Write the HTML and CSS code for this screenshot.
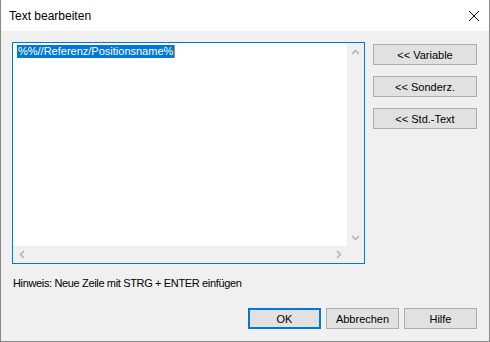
FILE: index.html
```html
<!DOCTYPE html>
<html lang="de">
<head>
<meta charset="utf-8">
<title>Text bearbeiten</title>
<link rel="stylesheet" href="styles.css">
</head>
<body>
<div class="window">
  <div class="titlebar">
    <span class="title">Text bearbeiten</span>
    <span class="close">
      <svg width="12" height="12" viewBox="0 0 12 12"><path d="M1 1 L11 11 M11 1 L1 11" stroke="#000" stroke-width="1" fill="none"/></svg>
    </span>
  </div>
  <div class="content">
    <div class="main-row">
      <div class="textbox">
        <div class="text-area"><span class="sel">%%//Referenz/Positionsname%</span><span class="caret"></span></div>
        <div class="vscroll">
          <span class="arrow"><svg width="9" height="6" viewBox="0 0 9 6"><path d="M1 5 L4.5 1.5 L8 5" stroke="#b5b5b5" stroke-width="1.6" fill="none"/></svg></span>
          <span class="arrow"><svg width="9" height="6" viewBox="0 0 9 6"><path d="M1 1 L4.5 4.5 L8 1" stroke="#b5b5b5" stroke-width="1.6" fill="none"/></svg></span>
        </div>
        <div class="hscroll">
          <span class="arrow"><svg width="6" height="9" viewBox="0 0 6 9"><path d="M5 1 L1.5 4.5 L5 8" stroke="#b5b5b5" stroke-width="1.6" fill="none"/></svg></span>
          <span class="arrow"><svg width="6" height="9" viewBox="0 0 6 9"><path d="M1 1 L4.5 4.5 L1 8" stroke="#b5b5b5" stroke-width="1.6" fill="none"/></svg></span>
        </div>
        <div class="corner"></div>
      </div>
      <div class="side-buttons">
        <button class="btn side">&lt;&lt; Variable</button>
        <button class="btn side">&lt;&lt; Sonderz.</button>
        <button class="btn side">&lt;&lt; Std.-Text</button>
      </div>
    </div>
    <div class="hint">Hinweis: Neue Zeile mit STRG + ENTER einfügen</div>
    <div class="bottom-buttons">
      <button class="btn default">OK</button>
      <button class="btn">Abbrechen</button>
      <button class="btn">Hilfe</button>
    </div>
  </div>
</div>
</body>
</html>
```
FILE: styles.css
```css
html, body {
  margin: 0;
  padding: 0;
  background: #f0f0f0;
}
body {
  font-family: "Liberation Sans", Arial, sans-serif;
  font-size: 11px;
  color: #000;
}
.window {
  width: 490px;
  height: 342px;
  box-sizing: border-box;
  border: 1px solid #888;
  border-top: none;
  display: flex;
  flex-direction: column;
  background: #f0f0f0;
}
.titlebar {
  height: 31px;
  flex: none;
  background: #fff;
  display: flex;
  align-items: center;
  justify-content: space-between;
  padding: 0 9px 0 8px;
}
.title {
  font-size: 12px;
  line-height: 16px;
  padding-top: 1px;
}
.close {
  width: 12px;
  height: 12px;
  display: flex;
}
.content {
  flex: 1;
  display: flex;
  flex-direction: column;
  padding: 11px 11px 12px 11px;
}
.main-row {
  display: flex;
  align-items: flex-start;
}
.textbox {
  width: 353px;
  height: 222px;
  box-sizing: border-box;
  border: 1px solid #0078d7;
  background: #f0f0f0;
  display: grid;
  grid-template-columns: 1fr 17px;
  grid-template-rows: 1fr 17px;
}
.text-area {
  background: #fff;
  padding: 2px 4px;
  display: flex;
  align-items: flex-start;
}
.sel {
  background: #0078d7;
  color: #fff;
  line-height: 13px;
  height: 13px;
  padding: 0 1px;
  white-space: pre;
}
.caret {
  width: 1px;
  height: 13px;
  background: #e0803a;
}
.vscroll {
  display: flex;
  flex-direction: column;
  justify-content: space-between;
}
.hscroll {
  display: flex;
  justify-content: space-between;
}
.arrow {
  width: 17px;
  height: 17px;
  display: flex;
  align-items: center;
  justify-content: center;
}
.side-buttons {
  display: flex;
  flex-direction: column;
  gap: 11px;
  margin-left: 8px;
  margin-top: 2px;
}
.btn {
  font-family: "Liberation Sans", Arial, sans-serif;
  font-size: 11px;
  color: #000;
  background: #e1e1e1;
  border: 1px solid #adadad;
  border-radius: 0;
  height: 21px;
  width: 73px;
  padding: 0;
  margin: 0;
  box-sizing: border-box;
}
.btn.side {
  width: 104px;
}
.btn.default {
  border: 2px solid #0078d7;
}
.hint {
  margin-top: 11px;
  padding-left: 1px;
  line-height: 16px;
  letter-spacing: -0.35px;
}
.bottom-buttons {
  margin-top: auto;
  display: flex;
  justify-content: flex-end;
  gap: 5px;
  padding-right: 1px;
}
```
